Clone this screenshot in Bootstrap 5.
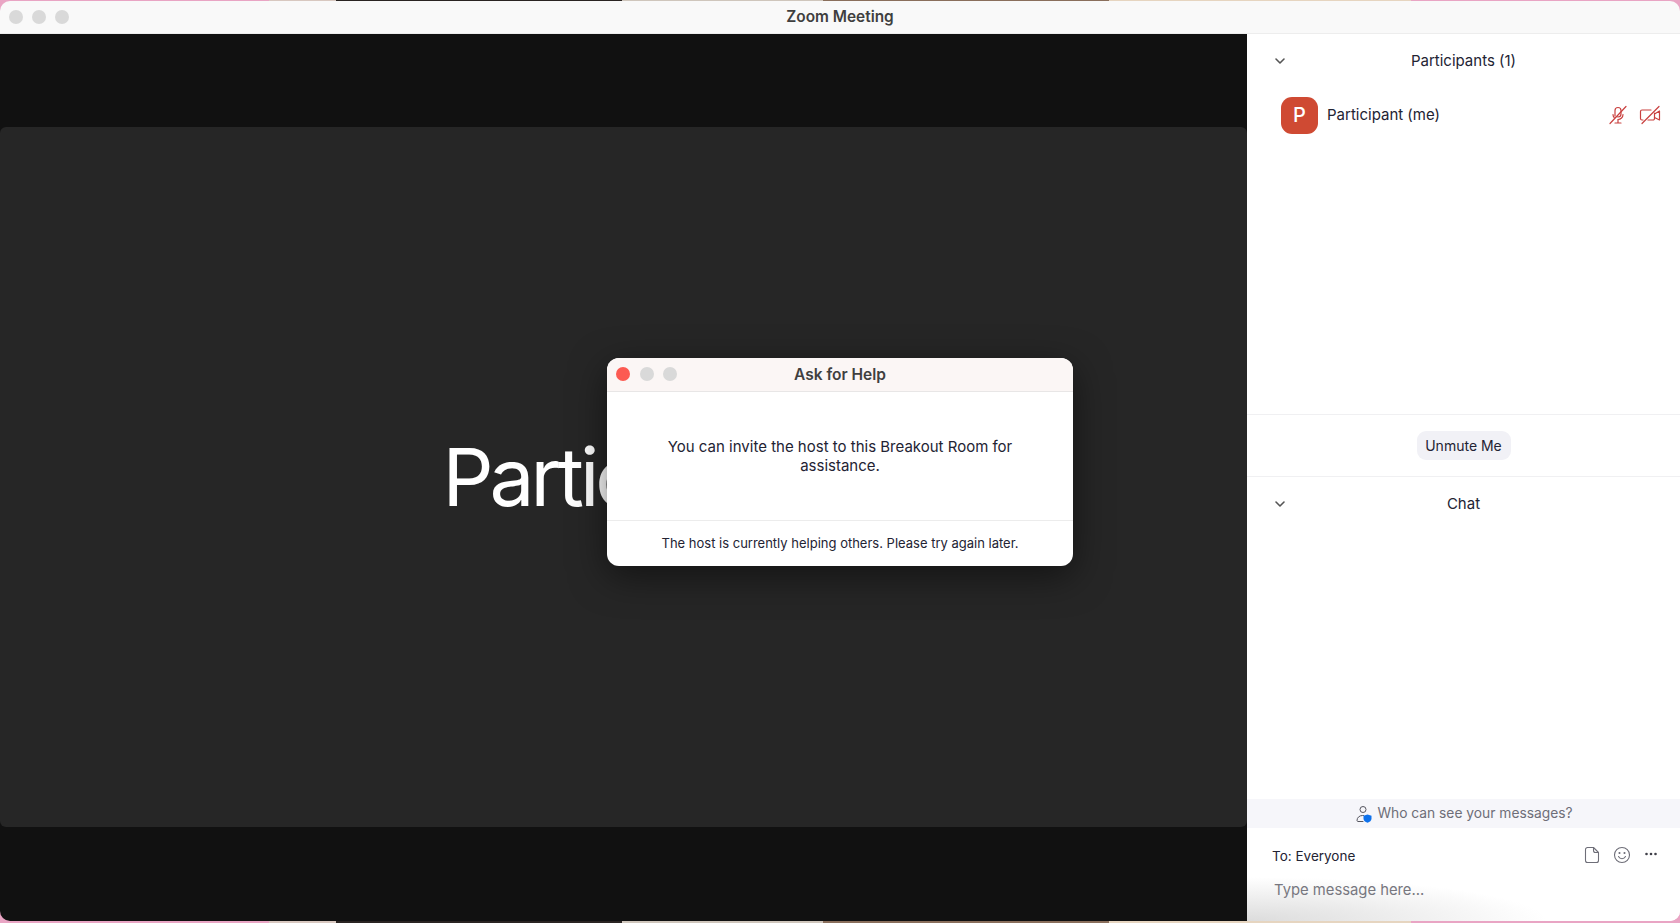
<!DOCTYPE html>
<html lang="en">
<head>
    <meta charset="UTF-8">
    <meta name="viewport" content="width=device-width, initial-scale=1.0">
    <title>Zoom Meeting</title>
    <link href="https://cdn.jsdelivr.net/npm/bootstrap@5.3.0/dist/css/bootstrap.min.css" rel="stylesheet">
    <style>
        html, body { height: 100%; }
        body {
            font-family: Inter, "Liberation Sans", sans-serif;
            color: #232333;
            overflow: hidden;
            background: linear-gradient(90deg, #e9a5c4 0 16%, #d8c8c0 16% 20%, #2a2422 20% 37%, #cfc6bc 37% 49%, #8a6f5c 49% 66%, #e6d5c0 66% 84%, #e9a5c4 84%);
        }
        .zm-window {
            height: 920px;
            margin-top: 1px;
            border-radius: 10px;
            overflow: hidden;
        }
        .zm-titlebar {
            height: 33px;
            background: #f9f9f9;
            border-bottom: 1px solid #ededed;
            font-size: 15.4px;
            font-weight: 600;
            color: #3f3f3f;
        }
        .zm-lights { left: 9px; top: 9px; gap: 9px; }
        .zm-dot {
            display: block;
            width: 14px;
            height: 14px;
            border-radius: 50%;
            background: #d9d9d9;
        }
        .zm-dot-red { background: #fc5a52; }
        .zm-stage {
            width: 1247px;
            background: #111;
            padding: 93px 0 94px;
        }
        .zm-tile {
            background: #262626;
            border-radius: 6px;
            color: #fff;
            font-size: 80px;
            font-weight: 400;
            letter-spacing: -4px;
        }
        .zm-dialog {
            left: 607px;
            top: 324px;
            width: 466px;
            height: 208px;
            background: #fff;
            border-radius: 12px;
            box-shadow: 0 10px 36px rgba(0, 0, 0, .5);
            overflow: hidden;
        }
        .zm-dialog-head {
            height: 34px;
            background: #fbf6f5;
            border-bottom: 1px solid #e8e6e6;
            font-size: 15.5px;
            font-weight: 600;
            color: #3f3f3f;
        }
        .zm-dialog-lights { left: 9px; top: 9px; gap: 9.5px; }
        .zm-dialog-body {
            height: 128px;
            padding: 0 50px;
            font-size: 15px;
            line-height: 19px;
        }
        .zm-dialog-foot {
            border-top: 1px solid #ececec;
            font-size: 13px;
        }
        .zm-side {
            width: 433px;
            background: #fff;
            font-size: 15px;
        }
        .zm-section-head {
            height: 54px;
            font-size: 15px;
        }
        .zm-chevron { left: 27px; top: 50%; margin-top: -5px; }
        .zm-participants { height: 326px; padding-top: 4px; }
        .zm-person { height: 46px; padding: 0 19px 0 34px; }
        .zm-avatar {
            width: 37px;
            height: 37px;
            border-radius: 11px;
            background: #cf4a33;
            color: #fff;
            font-size: 20px;
            font-weight: 500;
            margin-right: 9px;
        }
        .zm-unmute-row {
            height: 63px;
            border-top: 1px solid #f0f0f2;
            border-bottom: 1px solid #f0f0f2;
        }
        .zm-unmute {
            height: 29px;
            width: 94px;
            background: #f1f1f6;
            border-radius: 9px;
            font-size: 14px;
            color: #232333;
            padding: 0;
        }
        .zm-chat-head { height: 54px; }
        .zm-chat-space { flex: 1 1 auto; }
        .zm-who {
            height: 29px;
            background: #f6f6fa;
            color: #6e6e78;
            font-size: 13.8px;
            gap: 5px;
            padding-left: 2px;
        }
        .zm-compose {
            height: 93px;
            background: radial-gradient(ellipse 300px 44px at 0 100%, #dcdcdc 0, #fff 100%);
        }
        .zm-to-row { padding: 18px 22px 0 25px; height: 50px; font-size: 13.5px; }
        .zm-tools { gap: 13px; }
        .zm-input {
            padding-left: 27px;
            padding-top: 1px;
            color: #77777f;
            font-size: 14.8px;
        }
    </style>
</head>
<body>
    <div class="zm-window d-flex flex-column">
        <!-- Title bar -->
        <div class="zm-titlebar position-relative d-flex align-items-center justify-content-center flex-shrink-0">
            <div class="zm-lights position-absolute d-flex">
                <span class="zm-dot"></span><span class="zm-dot"></span><span class="zm-dot"></span>
            </div>
            Zoom Meeting
        </div>

        <div class="d-flex flex-grow-1" style="min-height:0">
            <!-- Video area -->
            <div class="zm-stage position-relative d-flex flex-shrink-0">
                <div class="zm-tile flex-grow-1 d-flex align-items-center justify-content-center">Participant</div>

                <div class="zm-dialog position-absolute d-flex flex-column">
                    <div class="zm-dialog-head position-relative d-flex align-items-center justify-content-center flex-shrink-0">
                        <div class="zm-dialog-lights position-absolute d-flex">
                            <span class="zm-dot zm-dot-red"></span><span class="zm-dot"></span><span class="zm-dot"></span>
                        </div>
                        Ask for Help
                    </div>
                    <div class="zm-dialog-body d-flex align-items-center justify-content-center text-center">You can invite the host to this Breakout Room for assistance.</div>
                    <div class="zm-dialog-foot flex-grow-1 d-flex align-items-center justify-content-center">The host is currently helping others. Please try again later.</div>
                </div>
            </div>

            <!-- Right panel -->
            <div class="zm-side d-flex flex-column flex-grow-1">
                <div class="zm-section-head position-relative d-flex align-items-center justify-content-center">
                    <svg class="zm-chevron position-absolute" width="12" height="10" viewBox="0 0 12 10" fill="none" stroke="#555" stroke-width="1.6" stroke-linecap="round" stroke-linejoin="round"><path d="M2 3l4 4 4-4"/></svg>
                    Participants (1)
                </div>
                <div class="zm-participants">
                    <div class="zm-person d-flex align-items-center">
                        <div class="zm-avatar d-flex align-items-center justify-content-center">P</div>
                        <span class="flex-grow-1">Participant (me)</span>
                        <svg style="margin-right:11px" width="20" height="20" viewBox="0 0 20 20" fill="none" stroke="#c9403f" stroke-width="1.2" stroke-linecap="round">
                            <path d="M7 11V5.500a3 3 0 0 1 6 0V9a3 3 0 0 1-3 3 3 3 0 0 1-1.500-.4"/>
                            <path d="M5 9.500a5 5 0 0 0 1.200 3.200M15 9.500a5 5 0 0 1-5 5v3M7 18h6"/>
                            <path d="M18 1.500L2 18.500"/>
                        </svg>
                        <svg width="22" height="20" viewBox="0 0 22 20" fill="none" stroke="#c9403f" stroke-width="1.2" stroke-linecap="round" stroke-linejoin="round">
                            <path d="M12 5H3a1.500 1.500 0 0 0-1.500 1.500v7A1.500 1.500 0 0 0 3 15h1"/>
                            <path d="M9 15h5a1.500 1.500 0 0 0 1.500-1.500V8"/>
                            <path d="M15.500 9l5-3v9l-5-2.500"/>
                            <path d="M20 1.500L3 18.500"/>
                        </svg>
                    </div>
                </div>
                <div class="zm-unmute-row d-flex align-items-center justify-content-center">
                    <button type="button" class="btn zm-unmute">Unmute Me</button>
                </div>
                <div class="zm-chat-head zm-section-head position-relative d-flex align-items-center justify-content-center">
                    <svg class="zm-chevron position-absolute" width="12" height="10" viewBox="0 0 12 10" fill="none" stroke="#555" stroke-width="1.6" stroke-linecap="round" stroke-linejoin="round"><path d="M2 3l4 4 4-4"/></svg>
                    Chat
                </div>
                <div class="zm-chat-space"></div>
                <div class="zm-who d-flex align-items-center justify-content-center">
                    <svg width="16" height="18" viewBox="0 0 16 18" fill="none">
                        <circle cx="7" cy="4.500" r="3" stroke="#55555f" stroke-width="1"/>
                        <path d="M7.500 10.500H6.500c-3 0-5.500 2-5.500 5 0 .6.500 1 1 1h5" stroke="#55555f" stroke-width="1" stroke-linecap="round"/>
                        <path d="M11.500 9.500l4 1.300v3c0 2-1.700 3.200-4 4-2.300-.8-4-2-4-4v-3z" fill="#0e71eb"/>
                    </svg>
                    Who can see your messages?
                </div>
                <div class="zm-compose">
                    <div class="zm-to-row d-flex justify-content-between align-items-start">
                        <span>To: Everyone</span>
                        <div class="zm-tools d-flex align-items-center">
                            <svg width="16" height="18" viewBox="0 0 16 18" fill="none" stroke="#6e6e78" stroke-width="1.100" stroke-linejoin="round"><path d="M3.500 1.500h6l5 5v8a2 2 0 0 1-2 2h-9a2 2 0 0 1-2-2v-11a2 2 0 0 1 2-2z"/><path d="M9.500 1.500v3a2 2 0 0 0 2 2h3"/></svg>
                            <svg width="18" height="18" viewBox="0 0 18 18" fill="none" stroke="#6e6e78" stroke-width="1.100" stroke-linecap="round"><circle cx="9" cy="9" r="7.500"/><path d="M5.500 10.500c.8 1.500 2 2.200 3.500 2.200s2.700-.7 3.500-2.200"/><circle cx="6.500" cy="7" r=".5" fill="#6e6e78"/><circle cx="11.500" cy="7" r=".5" fill="#6e6e78"/></svg>
                            <svg width="14" height="18" viewBox="0 0 14 18" fill="#3f3f48"><circle cx="2.500" cy="8" r="1.300"/><circle cx="7" cy="8" r="1.300"/><circle cx="11.500" cy="8" r="1.300"/></svg>
                        </div>
                    </div>
                    <div class="zm-input">Type message here...</div>
                </div>
            </div>
        </div>
    </div>

    <script src="https://cdn.jsdelivr.net/npm/bootstrap@5.3.0/dist/js/bootstrap.bundle.min.js"></script>
</body>
</html>
